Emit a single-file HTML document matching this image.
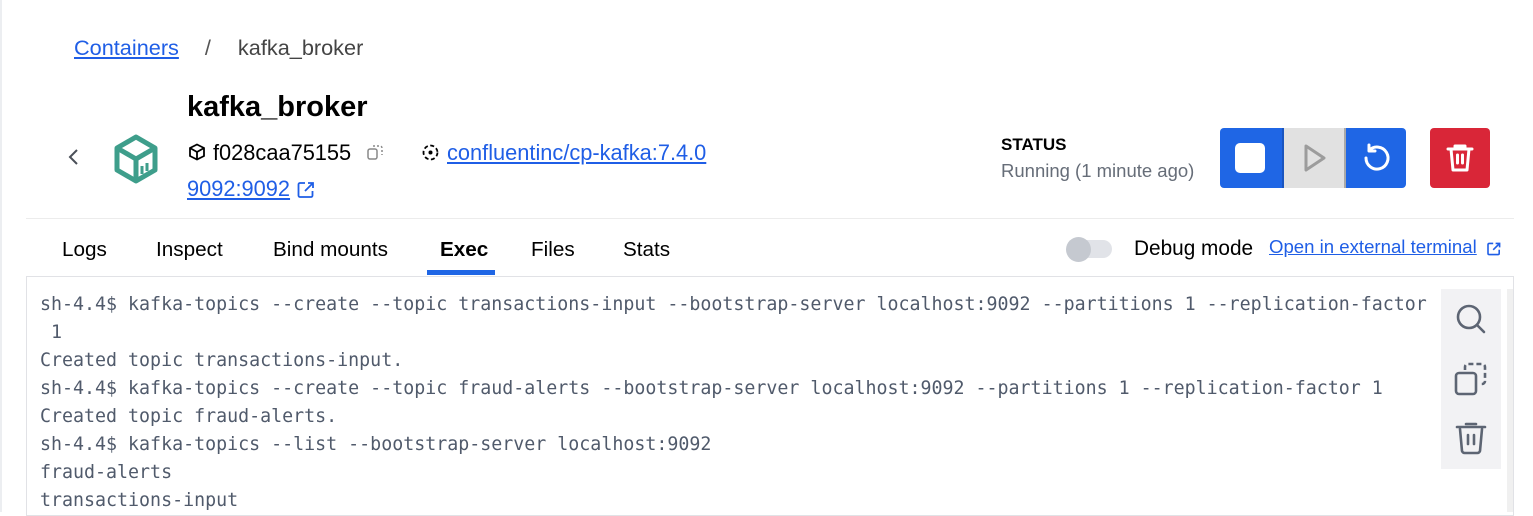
<!DOCTYPE html>
<html><head><meta charset="utf-8"><style>
*{margin:0;padding:0;box-sizing:border-box}
body{width:1533px;height:512px;overflow:hidden;background:#fff;font-family:"Liberation Sans",sans-serif;color:#000;position:relative}
.a{position:absolute;white-space:nowrap}
a,.lnk{color:#1f5ee6;text-decoration:underline}
.term{position:absolute;left:26px;top:276px;width:1488px;height:240px;border:1px solid #e1e2e6;}
.tt{position:absolute;left:13px;top:14px;font-family:"DejaVu Sans Mono","Liberation Mono",monospace;font-size:18.3px;line-height:28px;color:#505a6b;white-space:pre}
</style></head><body>
<div class="a" style="left:0;top:0;width:2px;height:512px;background:#eceef1"></div>
<div class="a" style="left:74px;top:35px;font-size:21.7px"><span class="lnk">Containers</span><span style="color:#555;margin-left:26px">/</span><span style="color:#444;margin-left:27px">kafka_broker</span></div>
<div class="a" style="left:64px;top:146px;font-size:22px;color:#555">
<svg width="20" height="22" viewBox="0 0 20 22"><path d="M13 4 L6 11 L13 18" fill="none" stroke="#4a4f58" stroke-width="2"/></svg></div>
<svg class="a" style="left:112px;top:134px" width="48" height="50" viewBox="0 0 48 50"><path d="M24 3 L43 14 L43 36 L24 47 L5 36 L5 14 Z M5 14 L24 25 L43 14 M24 25 L24 47" fill="none" stroke="#3e9e8b" stroke-width="5" stroke-linejoin="round"/><path d="M30 32 V40 M35 29 V37" stroke="#3e9e8b" stroke-width="3"/></svg>
<div class="a" style="left:187px;top:91px;font-size:29px;font-weight:bold">kafka_broker</div>
<svg class="a" style="left:188px;top:143px" width="18" height="18" viewBox="0 0 18 18"><path d="M9 1.5 L16 5 L16 13 L9 16.5 L2 13 L2 5 Z M2 5 L9 9 L16 5 M9 9 V16.5" fill="none" stroke="#000" stroke-width="1.8"/></svg>
<div class="a" style="left:213px;top:140px;font-size:21.8px">f028caa75155</div>
<svg class="a" style="left:366px;top:143px" width="18" height="18" viewBox="0 0 18 18"><rect x="2" y="6" width="9" height="10" rx="2" fill="none" stroke="#888" stroke-width="1.5"/><path d="M7 3h7a2 2 0 0 1 2 2v7" fill="none" stroke="#888" stroke-width="1.5" stroke-dasharray="2 2"/></svg>
<svg class="a" style="left:421px;top:143px" width="19" height="19" viewBox="0 0 19 19"><circle cx="9.5" cy="9.5" r="7" fill="none" stroke="#000" stroke-width="1.8" stroke-dasharray="4 2.5"/><circle cx="9.5" cy="9.5" r="2" fill="#000"/></svg>
<div class="a lnk" style="left:447px;top:140px;font-size:21.8px">confluentinc/cp-kafka:7.4.0</div>
<div class="a lnk" style="left:187px;top:176px;font-size:21.8px">9092:9092</div>
<svg class="a" style="left:296px;top:180px" width="20" height="20" viewBox="0 0 20 20"><path d="M9 3H4a1.5 1.5 0 0 0-1.5 1.5v11A1.5 1.5 0 0 0 4 17h11a1.5 1.5 0 0 0 1.5-1.5V11 M12 3h5v5 M17 3l-8 8" fill="none" stroke="#1f5ee6" stroke-width="1.8"/></svg>
<div class="a" style="left:1001px;top:135px;font-size:17px;font-weight:bold">STATUS</div>
<div class="a" style="left:1001px;top:160px;font-size:18.5px;color:#666d78">Running (1 minute ago)</div>
<div class="a" style="left:1220px;top:128px;width:62px;height:60px;background:#1f66e5;border-radius:4px 0 0 4px"><div style="position:absolute;left:15px;top:15px;width:30px;height:30px;background:#fff;border-radius:5px"></div></div>
<div class="a" style="left:1282px;top:128px;width:2px;height:60px;background:#1a55c0"></div>
<div class="a" style="left:1284px;top:128px;width:60px;height:60px;background:#e1e1e1"><svg style="position:absolute;left:16px;top:14px" width="28" height="32" viewBox="0 0 28 32"><path d="M6 4 L24 16 L6 28 Z" fill="none" stroke="#9c9c9c" stroke-width="3" stroke-linejoin="round"/></svg></div>
<div class="a" style="left:1344px;top:128px;width:2px;height:60px;background:#a9a9a9"></div>
<div class="a" style="left:1346px;top:128px;width:60px;height:60px;background:#1f66e5;border-radius:0 4px 4px 0"><svg style="position:absolute;left:14px;top:14px" width="32" height="32" viewBox="0 0 32 32"><path d="M6 16 A11 11 0 1 0 9 8.5 M9 3 V9 H15" fill="none" stroke="#fff" stroke-width="3" stroke-linecap="round" stroke-linejoin="round"/></svg></div>
<div class="a" style="left:1430px;top:128px;width:60px;height:60px;background:#d92638;border-radius:4px"><svg style="position:absolute;left:15px;top:14px" width="30" height="32" viewBox="0 0 30 32"><path d="M3 7H27 M10 7V4h10v3 M6 7l2 21h14l2-21 M12.5 13v8 M17.5 13v8" fill="none" stroke="#fff" stroke-width="3" stroke-linecap="round" stroke-linejoin="round"/></svg></div>
<div class="a" style="left:26px;top:218px;width:1488px;height:1px;background:#ececec"></div>
<div class="a" style="left:62px;top:238px;font-size:20.7px">Logs</div>
<div class="a" style="left:156px;top:238px;font-size:20.7px">Inspect</div>
<div class="a" style="left:273px;top:238px;font-size:20.7px">Bind mounts</div>
<div class="a" style="left:440px;top:238px;font-size:20.7px;font-weight:bold">Exec</div>
<div class="a" style="left:427px;top:270px;width:68px;height:5px;background:#1f66e5"></div>
<div class="a" style="left:531px;top:238px;font-size:20.7px">Files</div>
<div class="a" style="left:623px;top:238px;font-size:20.7px">Stats</div>
<div class="a" style="left:1068px;top:240px;width:44px;height:18px;border-radius:9px;background:#e1e3e8"></div>
<div class="a" style="left:1066px;top:237px;width:25px;height:25px;border-radius:50%;background:#c5c9d0"></div>
<div class="a" style="left:1134px;top:237px;font-size:20.8px">Debug mode</div>
<div class="a lnk" style="left:1269px;top:236px;font-size:18.6px">Open in external terminal</div>
<svg class="a" style="left:1486px;top:241px" width="16" height="16" viewBox="0 0 20 20"><path d="M9 3H4a1.5 1.5 0 0 0-1.5 1.5v11A1.5 1.5 0 0 0 4 17h11a1.5 1.5 0 0 0 1.5-1.5V11 M12 3h5v5 M17 3l-8 8" fill="none" stroke="#1f5ee6" stroke-width="2"/></svg>
<div class="term"><div class="tt">sh-4.4$ kafka-topics --create --topic transactions-input --bootstrap-server localhost:9092 --partitions 1 --replication-factor
 1
Created topic transactions-input.
sh-4.4$ kafka-topics --create --topic fraud-alerts --bootstrap-server localhost:9092 --partitions 1 --replication-factor 1
Created topic fraud-alerts.
sh-4.4$ kafka-topics --list --bootstrap-server localhost:9092
fraud-alerts
transactions-input</div></div>
<div class="a" style="left:1441px;top:289px;width:60px;height:180px;background:#f2f2f4"></div>
<div class="a" style="left:1507px;top:289px;width:6px;height:223px;background:#f0f0f0"></div>
<svg class="a" style="left:1454px;top:302px" width="34" height="34" viewBox="0 0 34 34"><circle cx="15" cy="15" r="11" fill="none" stroke="#5d6573" stroke-width="2.6"/><path d="M23 23 L30 30" stroke="#5d6573" stroke-width="2.6" stroke-linecap="round"/></svg>
<svg class="a" style="left:1454px;top:361px" width="34" height="36" viewBox="0 0 34 36"><rect x="2" y="12" width="20" height="21" rx="3" fill="none" stroke="#5d6573" stroke-width="2.6"/><path d="M11 9V6a3 3 0 0 1 3-3h14a3 3 0 0 1 3 3v14a3 3 0 0 1-3 3h-3" fill="none" stroke="#5d6573" stroke-width="2.6" stroke-dasharray="5 3"/></svg>
<svg class="a" style="left:1455px;top:422px" width="32" height="34" viewBox="0 0 32 34"><path d="M2 5H30 M11 2h10 M5 7l2 22a3 3 0 0 0 3 2h12a3 3 0 0 0 3-2l2-22 M13 13v9 M19 13v9" fill="none" stroke="#5d6573" stroke-width="2.6" stroke-linecap="round"/></svg>
</body></html>
